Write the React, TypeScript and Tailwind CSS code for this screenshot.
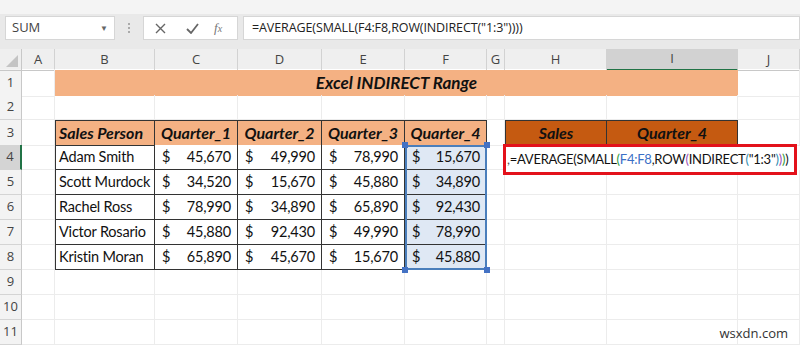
import React from 'react';

const COLS =
  'grid grid-cols-[22px_33px_100px_83px_84px_83px_82px_18px_102px_131px_62px]';
const CAL = "font-['Lato','Liberation_Sans',sans-serif]";

const rows = [
  ['Adam Smith', '45,670', '49,990', '78,990', '15,670'],
  ['Scott Murdock', '34,520', '15,670', '45,880', '34,890'],
  ['Rachel Ross', '78,990', '34,890', '65,890', '92,430'],
  ['Victor Rosario', '45,880', '92,430', '49,990', '78,990'],
  ['Kristin Moran', '65,890', '45,670', '15,670', '45,880'],
];

function RowHead({ n, active }: { n: number; active?: boolean }) {
  return (
    <div
      className={
        "flex items-center justify-center text-[13px] text-[#444] border-b border-[#d4d4d4] font-['Open_Sans',sans-serif] " +
        (active
          ? 'bg-[#d4d4d4] border-r-2 border-r-[#217346]'
          : 'bg-[#f3f3f3] border-r border-r-[#c8c8c8]')
      }
    >
      {n}
    </div>
  );
}

function Blank() {
  return <div className="border-r border-b border-[#ececec]" />;
}

function Money({ v, sel }: { v: string; sel?: boolean }) {
  return (
    <div
      className={
        'flex items-center justify-between pl-[7px] pr-[6px] text-[14.5px] tracking-[-0.2px] text-[#111] border-r border-b border-[#333] whitespace-nowrap ' +
        (sel ? 'bg-[#dfe8f4]' : 'bg-white')
      }
    >
      <span>$</span>
      <span>{v}</span>
    </div>
  );
}

function Handle({ pos }: { pos: string }) {
  return <div className={'absolute w-[6px] h-[6px] bg-[#4472c4] z-10 ' + pos} />;
}

export default function App() {
  return (
    <div className={'w-[800px] h-[347px] overflow-hidden bg-white relative ' + CAL}>
      {/* formula bar */}
      <div className="h-[14px] bg-[#f4f4f4]" />
      <div className="h-[35px] bg-[#e9e9e9] flex items-start pt-[2px] font-['Open_Sans',sans-serif]">
        <div className="ml-[5px] w-[110px] h-[24px] bg-white border border-[#d6d6d6] flex items-center justify-between px-[6px] text-[13px] text-[#444]">
          <span>SUM</span>
          <span className="text-[8px] text-[#666]">▼</span>
        </div>
        <div className="w-[28px] h-[24px] flex flex-col items-center justify-center gap-[2px]">
          <div className="w-[2px] h-[2px] bg-[#aaa]" />
          <div className="w-[2px] h-[2px] bg-[#aaa]" />
          <div className="w-[2px] h-[2px] bg-[#aaa]" />
        </div>
        <div className="w-[95px] h-[24px] bg-white border border-[#d6d6d6] flex items-center text-[#666]">
          <svg className="ml-[11px]" width="11" height="11" viewBox="0 0 11 11">
            <path d="M1 1L10 10M10 1L1 10" stroke="#666" strokeWidth="1.4" />
          </svg>
          <svg className="ml-[20px]" width="13" height="11" viewBox="0 0 13 11">
            <path d="M1 6L5 10L12 1" stroke="#666" strokeWidth="1.8" fill="none" />
          </svg>
          <span className="ml-[15px] text-[13px] italic font-['Liberation_Serif',serif] text-[#777]">
            f<span className="text-[10px]">x</span>
          </span>
        </div>
        <div className="ml-[5px] flex-1 h-[24px] bg-white border border-[#d6d6d6] flex items-center pl-[8px] text-[12.5px] tracking-[-0.1px] text-[#222] whitespace-nowrap">
          =AVERAGE(SMALL(F4:F8,ROW(INDIRECT("1:3"))))
        </div>
      </div>

      {/* column headers */}
      <div className={COLS + " h-[20px] bg-[#efefef] text-[13px] text-[#444] font-['Open_Sans',sans-serif]"}>
        <div className="relative border-r border-b border-[#c8c8c8]">
          <div className="absolute right-[3px] bottom-[3px] w-0 h-0 border-l-[12px] border-l-transparent border-b-[12px] border-b-[#c4c4c4]" />
        </div>
        {['A', 'B', 'C', 'D', 'E', 'F', 'G', 'H', 'I', 'J'].map((c) => (
          <div
            key={c}
            className={
              'flex items-center justify-center border-r border-[#d2d2d2] ' +
              (c === 'I'
                ? 'bg-[#d2d2d2] border-b-2 border-b-[#217346]'
                : 'border-b border-b-[#c8c8c8]')
            }
          >
            {c}
          </div>
        ))}
      </div>

      {/* row 1 */}
      <div className={COLS + ' h-[26px]'}>
        <RowHead n={1} />
        <Blank />
        <div className="col-span-8 my-[1px] bg-[#f4b183] flex items-center justify-center text-[17px] font-bold italic text-[#111] whitespace-nowrap">
          Excel INDIRECT Range
        </div>
        <Blank />
      </div>

      {/* row 2 */}
      <div className={COLS + ' h-[25px]'}>
        <RowHead n={2} />
        {Array.from({ length: 10 }).map((_, i) => (
          <Blank key={i} />
        ))}
      </div>

      {/* row 3 */}
      <div className={COLS + ' h-[25px]'}>
        <RowHead n={3} />
        <Blank />
        {['Sales Person', 'Quarter_1', 'Quarter_2', 'Quarter_3', 'Quarter_4'].map((h, i) => (
          <div
            key={h}
            className={
              'bg-[#f4b183] flex items-center text-[16px] font-bold italic text-[#111] border-y border-r border-[#333] whitespace-nowrap ' +
              (i === 0 ? 'border-l pl-[3px]' : 'justify-center')
            }
          >
            {h}
          </div>
        ))}
        <Blank />
        <div className="bg-[#c55a11] border border-[#333] flex items-center justify-center text-[16px] font-bold italic text-[#111]">
          Sales
        </div>
        <div className="bg-[#c55a11] border-y border-r border-[#333] flex items-center justify-center text-[16px] font-bold italic text-[#111]">
          Quarter_4
        </div>
        <Blank />
      </div>

      {/* data rows */}
      {rows.map((r, idx) => (
        <div key={r[0]} className={COLS + ' h-[25px] relative'}>
          <RowHead n={idx + 4} active={idx === 0} />
          <Blank />
          <div className="border-l border-r border-b border-[#333] flex items-center pl-[3px] text-[14.5px] tracking-[-0.2px] text-[#111] whitespace-nowrap overflow-hidden">
            {r[0]}
          </div>
          <Money v={r[1]} />
          <Money v={r[2]} />
          <Money v={r[3]} />
          <div className="relative flex">
            <div className="flex-1 grid">
              <Money v={r[4]} sel />
            </div>
            <div
              className={
                'absolute inset-0 pointer-events-none border-x-2 border-[#4a7ebb] ' +
                (idx === 0 ? 'border-t-2 ' : '') +
                (idx === 4 ? 'border-b-2 ' : '')
              }
            />
            {idx === 0 && (
              <>
                <Handle pos="-left-[3px] -top-[3px]" />
                <Handle pos="-right-[3px] -top-[3px]" />
              </>
            )}
            {idx === 4 && (
              <>
                <Handle pos="-left-[3px] -bottom-[3px]" />
                <Handle pos="-right-[3px] -bottom-[3px]" />
              </>
            )}
          </div>
          <Blank />
          {idx === 0 ? (
            <div className="col-span-3 relative">
              <div className="absolute -left-[2px] right-[3px] -top-[1px] h-[31px] z-10 bg-white border-[3px] border-[#e3111b] flex items-center pl-[1px] text-[13px] tracking-[-0.25px] text-[#111] whitespace-nowrap overflow-hidden">
                <span className="text-[#555]">,</span>
                <span>=AVERAGE(SMALL</span>
                <span className="text-[#2e9a3e]">(</span>
                <span className="text-[#3b6fc6]">F4:F8</span>
                <span>,ROW</span>
                <span className="text-[#9b4fb8]">(</span>
                <span>INDIRECT</span>
                <span className="text-[#2e8bb0]">(</span>
                <span>"1:3"</span>
                <span className="text-[#2e8bb0]">)</span>
                <span className="text-[#9b4fb8]">)</span>
                <span className="text-[#2e9a3e]">)</span>
                <span>)</span>
              </div>
            </div>
          ) : (
            <>
              <Blank />
              <Blank />
              <Blank />
            </>
          )}
        </div>
      ))}

      {/* rows 9-11 */}
      {[9, 10, 11].map((n) => (
        <div key={n} className={COLS + ' h-[25px]'}>
          <RowHead n={n} />
          {Array.from({ length: 10 }).map((_, i) => (
            <Blank key={i} />
          ))}
        </div>
      ))}

      <div className="absolute right-[12px] bottom-[4px] text-[13px] text-[#333] font-['Open_Sans',sans-serif]">
        wsxdn.com
      </div>
    </div>
  );
}
